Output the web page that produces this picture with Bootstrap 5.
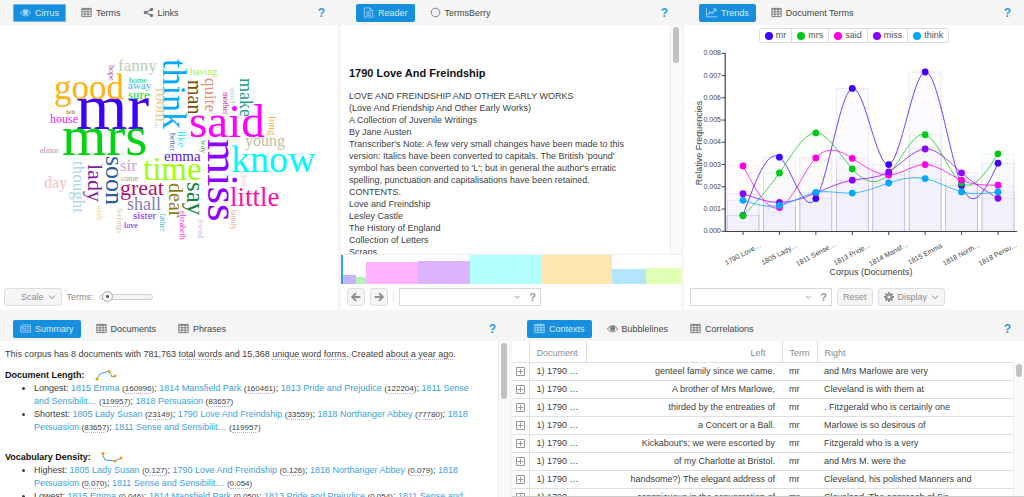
<!DOCTYPE html>
<html lang="en">
<head>
<meta charset="utf-8">
<meta name="viewport" content="width=device-width, initial-scale=1">
<title>Corpus Tools</title>
<link href="https://cdn.jsdelivr.net/npm/bootstrap@5.3.0/dist/css/bootstrap.min.css" rel="stylesheet">
<script src="https://cdn.jsdelivr.net/npm/bootstrap@5.3.0/dist/js/bootstrap.bundle.min.js"></script>
<style>
  :root { --shell: #f5f5f5; --accent: #168fdf; --link: #3c9fe0; }
  body { font: 9px/12px "Liberation Sans", Arial, sans-serif; color: #404040; background: var(--shell); }
  button, input { font: inherit; color: inherit; }
  a { color: var(--link); text-decoration: none; }
  .workspace { grid-template-rows: minmax(0, 310fr) minmax(0, 181fr); gap: 6px; }
  .row-top, .row-bottom { gap: 3px; min-height: 0; }
  .row-top { grid-template-columns: minmax(0, 338fr) minmax(0, 340fr) minmax(0, 340fr); }
  .row-bottom { grid-template-columns: minmax(0, 509fr) minmax(0, 512fr); }
  .pane { min-width: 0; min-height: 0; }
  .pane-head { height: 25px; padding: 0 13px; flex: none; }
  .pane + .pane .pane-head { padding-left: 15px; }
  .pane-body { background: #fff; min-height: 0; }
  .tab { height: 18px; padding: 0 7px; gap: 4px; border: 0; border-radius: 2px; background: none; color: #444; line-height: 16px; }
  .tab svg { width: 11px; height: 11px; color: #777; }
  .tab.active { background: var(--accent); color: #d9eefb; }
  .tab.active svg { color: #9fd3f7; }
  .tab.ringed { box-shadow: inset 0 0 0 1px #6bb6ec; }
  .help { border: 0; background: none; padding: 0; color: #2f9be0; font-size: 12px; font-weight: 700; }
  .tools { height: 26px; padding: 4px 6px; gap: 5px; flex: none; color: #8a8a8a; }
  .tool { height: 18px; border: 1px solid #dedede; border-radius: 3px; background: #f5f5f5; color: #8e8e8e; padding: 0 5px; gap: 4px; line-height: 16px; }
  .tool svg { width: 10px; height: 10px; }
  .tool svg.chev { width: 8px; height: 8px; }
  .tool-icon { padding: 0 3px; }
  .combo { height: 18px; width: 142px; border: 1px solid #d9d9d9; background: #fff; padding-right: 4px; gap: 9px; }
  .combo input { border: 0; outline: 0; background: none; min-width: 0; height: 16px; padding: 0 4px; }
  .combo button { border: 0; padding: 0; background: none; color: #999; font-weight: 700; font-size: 11px; }
  .combo svg { width: 8px; height: 8px; }
  .slim { appearance: none; width: 54px; height: 12px; background: none; margin: 0; }
  .slim::-webkit-slider-runnable-track { height: 6px; border: 1px solid #d0d0d0; border-radius: 3px; background: #f5f5f5; }
  .slim::-webkit-slider-thumb { appearance: none; width: 11px; height: 11px; margin-top: -4px; border: 1px solid #aaa; border-radius: 50%; background: radial-gradient(circle, #555 0 1px, #f5f5f5 2px); }
  .rail { width: 11px; flex: none; background: #fafafa; border-left: 1px solid #ececec; padding: 2px; }
  .thumb { width: 6px; border-radius: 3px; background: #c1c1c1; }
  .book { padding: 42px 30px 0 8px; min-height: 0; }
  .book h1 { font-size: 11px; line-height: 12px; font-weight: 700; color: #111; margin: 0 0 11px; }
  .strip { height: 30px; flex: none; border-top: 1px solid #eee; }
  .strip .cursor { width: 2px; height: 29px; background: #3a9ee2; flex: none; }
  .legend { height: 15px; margin-top: 3px; border: 1px solid #ddd; border-radius: 3px; }
  .legend button { border: 0; border-left: 1px solid #ddd; background: none; padding: 0 5px; gap: 3px; line-height: 13px; color: #555; }
  .legend button:first-child { border-left: 0; }
  .legend i { width: 8px; height: 8px; border-radius: 50%; }
  .digest { padding: 7px 12px 0 5px; line-height: 13px; min-height: 0; }
  .digest h2 { font-size: 9px; line-height: 13px; font-weight: 700; color: #111; margin: 0; }
  .digest ul { padding-left: 29px; margin: 0 0 17px; }
  .digest small { font-size: 8px; }
  .hint { border-bottom: 1px dotted #b9a9f0; }
  .spark { width: 22px; height: 11px; margin-left: 10px; }
  .kwic { table-layout: fixed; line-height: 13px; color: #404040; white-space: nowrap; }
  .kwic > :not(caption) > * > * { height: 18px; padding: 2px 7px; border-bottom: 1px solid #dedede; color: inherit; overflow: hidden; }
  .kwic > thead > tr > th { height: 21px; padding-top: 4px; font-weight: 400; color: #8c8c8c; border-left: 1px solid #dedede; }
  .kwic > thead > tr > th:first-child { border-left: 0; }
  .kwic > tbody > tr > td:first-child { padding: 4px 0 0 4px; border-right: 1px solid #dedede; }
  .kwic > tbody > tr > td:nth-child(2) { padding-right: 0; }
  .kwic svg { width: 9px; height: 9px; display: block; }
  .kwic button { border: 0; background: none; padding: 0; color: #999; display: block; }
  .kwic-rail { top: 21px; right: 0; bottom: 0; }
  .pane-foot { border-bottom: 1px solid #ccc; }
  .chart text { fill: #444; font-family: "Liberation Sans", Arial, sans-serif; }
  .cloud text { font-family: "Palatino Linotype", Palatino, "Liberation Serif", serif; }
</style>
</head>
<body>
<svg class="d-none">
  <symbol id="i-grid" viewBox="0 0 12 11"><path d="M.9 1h10.2v9H.9zM.9 2h10.2M.9 4.7h10.2M.9 7.3h10.2M4.3 1v9M7.7 1v9" fill="none" stroke="currentColor"/></symbol>
  <symbol id="i-eye" viewBox="0 0 12 11"><path d="M.5 6C3.3 1.3 8.7 1.3 11.5 6 8.7 10.2 3.3 10.2.5 6z" fill="none" stroke="currentColor"/><circle cx="6" cy="5.2" r="2.8" fill="currentColor"/><path d="M4.6 5.2A1.5 1.5 0 0 1 6 3.8" fill="none" stroke="#fff" stroke-opacity=".7" stroke-width=".6"/></symbol>
  <symbol id="i-share" viewBox="0 0 12 11"><path d="M9.2 2.2 3 5.5l6.2 3.3" fill="none" stroke="currentColor" stroke-width="1.2"/><circle cx="9.2" cy="2.3" r="1.9" fill="currentColor"/><circle cx="2.7" cy="5.5" r="1.9" fill="currentColor"/><circle cx="9.2" cy="8.7" r="1.9" fill="currentColor"/></symbol>
  <symbol id="i-file" viewBox="0 0 12 11"><path d="M1.5.5h6l3 2.8v7.2h-9zM7.3.5v3h3M3.5 5h5M3.5 6.8h5M3.5 8.6h5" fill="none" stroke="currentColor" stroke-width=".9"/></symbol>
  <symbol id="i-ring" viewBox="0 0 12 11"><circle cx="6" cy="5.5" r="4.7" fill="none" stroke="currentColor"/></symbol>
  <symbol id="i-line" viewBox="0 0 12 11"><path d="M.5.5v9.7H12" fill="none" stroke="currentColor"/><path d="m2 8 2.7-3.2 2 1.8L10.3 2M7.8 1.7h2.8v2.8" fill="none" stroke="currentColor" stroke-width="1.2"/></symbol>
  <symbol id="i-news" viewBox="0 0 12 11"><path d="M2.2 1.5h9.3v8H1.4a.9.9 0 0 1-.9-.9V3h1.7v5.8M3.7 3.3h3v2.6h-3zM7.8 3.3h2.7M7.8 5.2h2.7M3.7 7.5h6.8" fill="none" stroke="currentColor" stroke-width=".9"/></symbol>
  <symbol id="i-left" viewBox="0 0 10 10"><path d="M9.3 5H1.6M5 1.2 1.2 5 5 8.8" fill="none" stroke="currentColor" stroke-width="1.9"/></symbol>
  <symbol id="i-right" viewBox="0 0 10 10"><path d="M.7 5h7.7M5 1.2 8.8 5 5 8.8" fill="none" stroke="currentColor" stroke-width="1.9"/></symbol>
  <symbol id="i-down" viewBox="0 0 8 8"><path d="m1.2 2.6 2.8 3 2.8-3" fill="none" stroke="currentColor"/></symbol>
  <symbol id="i-gear" viewBox="0 0 10 10"><circle cx="5" cy="5" r="2.6" fill="none" stroke="currentColor" stroke-width="2"/><path d="M5 0v2M5 8v2M0 5h2M8 5h2M1.5 1.5l1.3 1.3M7.2 7.2l1.3 1.3M8.5 1.5 7.2 2.8M2.8 7.2 1.5 8.5" stroke="currentColor" stroke-width="1.8"/></symbol>
  <symbol id="i-plus" viewBox="0 0 9 9"><path d="M.5.5h8v8h-8zM4.5 2v5M2 4.5h5" fill="none" stroke="currentColor"/></symbol>
</svg>

<main class="workspace d-grid vh-100 overflow-hidden">
  <div class="row-top d-grid">
    <section class="pane d-flex flex-column">
      <header class="pane-head d-flex align-items-center">
        <nav class="nav flex-grow-1 column-gap-2">
          <button class="tab ringed active d-flex align-items-center"><svg><use href="#i-eye"/></svg>Cirrus</button>
          <button class="tab d-flex align-items-center"><svg><use href="#i-grid"/></svg>Terms</button>
          <button class="tab d-flex align-items-center"><svg><use href="#i-share"/></svg>Links</button>
        </nav>
        <button class="help">?</button>
      </header>
      <div class="pane-body flex-grow-1 d-flex flex-column">
        <svg class="cloud w-100 flex-grow-1" id="cloud" viewBox="0 25 338 259" style="min-height:0"></svg>
        <div class="tools d-flex align-items-center ps-1">
          <button class="tool d-flex align-items-center ps-3">Scale <svg class="chev"><use href="#i-down"/></svg></button>
          <label for="terms">Terms:</label>
          <input id="terms" class="slim" type="range" min="0" max="100" value="6">
        </div>
      </div>
    </section>

    <section class="pane d-flex flex-column">
      <header class="pane-head d-flex align-items-center">
        <nav class="nav flex-grow-1 column-gap-2">
          <button class="tab active d-flex align-items-center"><svg><use href="#i-file"/></svg>Reader</button>
          <button class="tab d-flex align-items-center"><svg><use href="#i-ring"/></svg>TermsBerry</button>
        </nav>
        <button class="help">?</button>
      </header>
      <div class="pane-body flex-grow-1 d-flex flex-column">
        <div class="d-flex flex-grow-1 overflow-hidden">
          <article class="book flex-grow-1 overflow-hidden">
            <h1>1790 Love And Freindship</h1>
            LOVE AND FREINDSHIP AND OTHER EARLY WORKS<br>
            (Love And Friendship And Other Early Works)<br>
            A Collection of Juvenile Writings<br>
            By Jane Austen<br>
            Transcriber's Note: A few very small changes have been made to this version: Italics have been converted to capitals. The British 'pound' symbol has been converted to 'L'; but in general the author's erratic spelling, punctuation and capitalisations have been retained.<br>
            CONTENTS.<br>
            Love and Freindship<br>
            Lesley Castle<br>
            The History of England<br>
            Collection of Letters<br>
            Scraps
          </article>
          <div class="rail"><div class="thumb" style="height:16%"></div></div>
        </div>
        <div class="strip d-flex align-items-end" id="strip"><div class="cursor"></div></div>
        <div class="tools d-flex align-items-center">
          <button class="tool tool-icon d-flex align-items-center" aria-label="Previous"><svg><use href="#i-left"/></svg></button>
          <button class="tool tool-icon d-flex align-items-center" aria-label="Next"><svg><use href="#i-right"/></svg></button>
          <div class="vr my-1"></div>
          <div class="combo d-flex align-items-center">
            <input class="flex-grow-1" aria-label="Search terms">
            <svg><use href="#i-down"/></svg><button>?</button>
          </div>
        </div>
      </div>
    </section>

    <section class="pane d-flex flex-column">
      <header class="pane-head d-flex align-items-center">
        <nav class="nav flex-grow-1 column-gap-2">
          <button class="tab active d-flex align-items-center"><svg><use href="#i-line"/></svg>Trends</button>
          <button class="tab d-flex align-items-center"><svg><use href="#i-grid"/></svg>Document Terms</button>
        </nav>
        <button class="help">?</button>
      </header>
      <div class="pane-body flex-grow-1 d-flex flex-column">
        <div class="legend d-flex align-self-center" id="legend"></div>
        <svg class="chart w-100 flex-grow-1" id="chart" viewBox="684 43 340 241" style="min-height:0"></svg>
        <div class="tools d-flex align-items-center">
          <div class="combo d-flex align-items-center">
            <input class="flex-grow-1" aria-label="Search trends">
            <svg><use href="#i-down"/></svg><button>?</button>
          </div>
          <button class="tool">Reset</button>
          <button class="tool d-flex align-items-center"><svg><use href="#i-gear"/></svg>Display <svg class="chev"><use href="#i-down"/></svg></button>
        </div>
      </div>
    </section>
  </div>

  <div class="row-bottom d-grid">
    <section class="pane d-flex flex-column">
      <header class="pane-head d-flex align-items-center">
        <nav class="nav flex-grow-1 column-gap-2">
          <button class="tab active d-flex align-items-center"><svg><use href="#i-news"/></svg>Summary</button>
          <button class="tab d-flex align-items-center"><svg><use href="#i-grid"/></svg>Documents</button>
          <button class="tab d-flex align-items-center"><svg><use href="#i-grid"/></svg>Phrases</button>
        </nav>
        <button class="help">?</button>
      </header>
      <div class="pane-body flex-grow-1 d-flex overflow-hidden">
        <div class="digest flex-grow-1 overflow-hidden">
          <p class="mb-2">This corpus has 8 documents with 781,763 <span class="hint">total words</span> and 15,368 <span class="hint">unique word forms</span>. Created <span class="hint">about a year ago</span>.</p>
          <h2 class="d-flex align-items-center">Document Length:
            <svg class="spark" viewBox="0 0 22 11"><path d="M1 10 5 4l9-3 3 6 3-1" fill="none" stroke="#3c9fe0"/><g fill="#f90"><circle cx="2" cy="9" r="1.5"/><circle cx="14" cy="1.5" r="1.5"/><circle cx="20" cy="6" r="1.5"/></g></svg></h2>
          <ul>
            <li>Longest: <a href="#">1815 Emma</a> <small>(<span class="hint">160996</span>)</small>; <a href="#">1814 Mansfield Park</a> <small>(<span class="hint">160461</span>)</small>; <a href="#">1813 Pride and Prejudice</a> <small>(<span class="hint">122204</span>)</small>; <a href="#">1811 Sense and Sensibilit…</a> <small>(<span class="hint">119957</span>)</small>; <a href="#">1818 Persuasion</a> <small>(<span class="hint">83657</span>)</small></li>
            <li>Shortest: <a href="#">1805 Lady Susan</a> <small>(<span class="hint">23149</span>)</small>; <a href="#">1790 Love And Freindship</a> <small>(<span class="hint">33559</span>)</small>; <a href="#">1818 Northanger Abbey</a> <small>(<span class="hint">77780</span>)</small>; <a href="#">1818 Persuasion</a> <small>(<span class="hint">83657</span>)</small>; <a href="#">1811 Sense and Sensibilit…</a> <small>(<span class="hint">119957</span>)</small></li>
          </ul>
          <h2 class="d-flex align-items-center">Vocabulary Density:
            <svg class="spark" viewBox="0 0 22 11"><path d="m1 1 3 7 10 1 6-3" fill="none" stroke="#3c9fe0"/><g fill="#f90"><circle cx="2" cy="1.5" r="1.5"/><circle cx="14" cy="9" r="1.5"/><circle cx="20" cy="6" r="1.5"/></g></svg></h2>
          <ul>
            <li>Highest: <a href="#">1805 Lady Susan</a> <small>(<span class="hint">0.127</span>)</small>; <a href="#">1790 Love And Freindship</a> <small>(<span class="hint">0.126</span>)</small>; <a href="#">1818 Northanger Abbey</a> <small>(<span class="hint">0.079</span>)</small>; <a href="#">1818 Persuasion</a> <small>(<span class="hint">0.070</span>)</small>; <a href="#">1811 Sense and Sensibilit…</a> <small>(<span class="hint">0.054</span>)</small></li>
            <li>Lowest: <a href="#">1815 Emma</a> <small>(<span class="hint">0.046</span>)</small>; <a href="#">1814 Mansfield Park</a> <small>(<span class="hint">0.050</span>)</small>; <a href="#">1813 Pride and Prejudice</a> <small>(<span class="hint">0.054</span>)</small>; <a href="#">1811 Sense and</a></li>
          </ul>
        </div>
        <div class="rail"><div class="thumb" style="height:37%"></div></div>
      </div>
    </section>

    <section class="pane d-flex flex-column">
      <header class="pane-head d-flex align-items-center">
        <nav class="nav flex-grow-1 column-gap-2">
          <button class="tab active d-flex align-items-center"><svg><use href="#i-grid"/></svg>Contexts</button>
          <button class="tab d-flex align-items-center"><svg><use href="#i-eye"/></svg>Bubblelines</button>
          <button class="tab d-flex align-items-center"><svg><use href="#i-grid"/></svg>Correlations</button>
        </nav>
        <button class="help">?</button>
      </header>
      <div class="pane-body pane-foot flex-grow-1 position-relative overflow-hidden">
        <table class="kwic table mb-0">
          <colgroup><col style="width:17px"><col style="width:57px"><col><col style="width:35px"><col style="width:207px"></colgroup>
          <thead><tr><th></th><th>Document</th><th class="text-end pe-3">Left</th><th>Term</th><th>Right</th></tr></thead>
          <tbody id="kwic"></tbody>
        </table>
        <div class="rail kwic-rail position-absolute"><div class="thumb" style="height:10%"></div></div>
      </div>
    </section>
  </div>
</main>

<script>
const NS = 'http://www.w3.org/2000/svg';
function add(parent, tag, attrs, text) {
  const el = document.createElementNS(NS, tag);
  for (const k in attrs) el.setAttribute(k, attrs[k]);
  if (text) el.textContent = text;
  parent.append(el);
  return el;
}

// Word cloud: word, x, y, size, colour, 1 when turned on its side
const words = [
  ['mr',76,129,66,'#3d00ff'],['mrs',62,155,57,'#00d310'],['good',54,99,35,'#ffb012'],['fanny',118,71,17,'#b8cdb8'],
  ['home',129,83,8,'#21d04d'],['away',128,89,11,'#47b0f5'],['sure',128,99,13,'#14d62c'],['felt',66,114,7,'#7d641c'],
  ['house',50,123,12,'#ef24df'],['elinor',40,153,8,'#9890c2'],['having',190,75,10,'#a8ef45'],['said',189,137,47,'#ff00ff'],
  ['young',245,146,16,'#c4baa0'],['know',231,172,38,'#00f8ff'],['emma',164,161,15,'#5416f0'],['time',143,180,33,'#9dff0a'],
  ['sir',120,171,17,'#cba3da'],['come',121,181,8,'#b3a066'],['great',120,195,22,'#b40f72'],['shall',127,210,18,'#8380b8'],
  ['sister',133,219,11,'#7c22f3'],['love',124,228,8,'#4217f0'],['day',44,188,16,'#f5c0ba'],['little',230,206,27,'#ff0dab'],
  ['think',163,59,34,'#00a9ff',1],['hope',109,65,8,'#a048ad',1],['room',156,88,16,'#e9c991',1],['oh',154,122,6,'#b9d7f2',1],
  ['man',188,80,20,'#735008',1],['quite',205,78,17,'#dc8e80',1],['mother',223,92,8,'#ac2a86',1],['mind',230,87,8,'#c5d0c2',1],
  ['make',240,78,18,'#1d9b90',1],['long',269,116,11,'#f4b33b',1],['like',178,131,11,'#1fe6f5',1],['better',170,133,8,'#4d6ba8',1],
  ['way',201,140,8,'#3f9b58',1],['miss',208,139,45,'#8b00ff',1],['lady',88,164,22,'#7f1d9b',1],['soon',106,156,26,'#2b5c9e',1],
  ['thought',73,161,17,'#aed4ee',1],['wish',97,205,8,'#f0d275',1],['feelings',117,208,8,'#cfc8b4',1],['dear',169,183,20,'#8b7d18',1],
  ['say',187,182,25,'#128036',1],['father',160,213,8,'#46b9c9',1],['elizabeth',180,211,8,'#f825c4',1],['friend',198,219,8,'#d5b4df',1],
  ['family',231,209,8,'#e8a794',1],['just',242,175,8,'#f4cbc8',1]];
const cloud = document.getElementById('cloud');
for (const [w, x, y, size, fill, side] of words)
  add(cloud, 'text', { transform: `translate(${x} ${y})${side ? ' rotate(90)' : ''}`, 'font-size': size, fill }, w);

// Reader strip: width, height in percent, colour
for (const [w, h, c] of [[13,30,'#c4b3ff'],[10,25,'#b3f2b7'],[52,76,'#ffb3ff'],[52,79,'#dcb3ff'],[70,99,'#b3ffff'],[71,99,'#ffe6b0'],[34,52,'#b3e5ff'],[35,55,'#e1ffb3']])
  document.getElementById('strip').insertAdjacentHTML('beforeend', `<div style="flex:${w} 1 0;height:${h}%;background:${c}"></div>`);

// Trends: relative frequency per document, in thousandths
const series = [
  ['mr','#3d00ff',[.72,3.33,1.47,6.42,3,7.16,2.06,3.06]],
  ['mrs','#00c814',[.7,2.62,4.42,2.8,2.58,4.34,2.17,3.48]],
  ['said','#ff00e6',[2.94,1.07,3.3,3.28,2.53,3,2.3,2.07]],
  ['miss','#8b00ff',[1.69,1.3,1.72,2.3,2.67,3.7,2.63,1.48]],
  ['think','#00a9ff',[1.39,1.16,1.75,1.72,2.17,2.37,1.77,1.77]]];
const docs = ['1790 Love…','1805 Lady…','1811 Sense…','1813 Pride…','1814 Mansf…','1815 Emma','1818 North…','1818 Persu…'];
const chart = document.getElementById('chart');
const X = i => 743 + 36.43 * i, Y = v => 231.3 - 22.25 * v;

// Slopes of the natural cubic spline through equally spaced values
function slopes(y) {
  const n = y.length, c = [], d = [];
  for (let i = 0; i < n; i++) {
    const a = i ? 1 : 0, b = i && i < n - 1 ? 4 : 2;
    const r = 3 * (y[Math.min(i + 1, n - 1)] - y[Math.max(i - 1, 0)]);
    const m = b - a * (i ? c[i - 1] : 0);
    c[i] = 1 / m;
    d[i] = (r - a * (i ? d[i - 1] : 0)) / m;
  }
  for (let i = n - 2; i >= 0; i--) d[i] -= c[i] * d[i + 1];
  return d;
}
for (const [, color, vals] of series)
  vals.forEach((v, i) => add(chart, 'rect', { x: X(i) - 16, y: Y(v), width: 32, height: 231.3 - Y(v), fill: color, 'fill-opacity': .014, stroke: color, 'stroke-opacity': .1, 'stroke-width': .8 }));
add(chart, 'path', { d: 'M725.2 53v178.5H1017', fill: 'none', stroke: '#444', 'stroke-width': 1.2 });
for (let v = 0; v <= 8; v++) {
  add(chart, 'path', { d: `M721.5 ${Y(v)}h4`, stroke: '#444' });
  add(chart, 'text', { x: 721, y: Y(v) + 2, 'font-size': 7, 'text-anchor': 'end' }, '0.00' + v);
}
docs.forEach((t, i) => {
  add(chart, 'path', { d: `M${X(i)} 231v4`, stroke: '#444' });
  add(chart, 'text', { transform: `translate(${X(i) + 1} 256) rotate(-28)`, 'font-size': 7, 'text-anchor': 'middle' }, t);
});
add(chart, 'text', { x: 871, y: 275, 'font-size': 9, 'text-anchor': 'middle' }, 'Corpus (Documents)');
add(chart, 'text', { transform: 'translate(702 143) rotate(-90)', 'font-size': 9, 'text-anchor': 'middle' }, 'Relative Frequencies');
for (const [, color, vals] of series) {
  const ys = vals.map(Y), s = slopes(ys), h = 36.43 / 3;
  let d = `M${X(0)} ${ys[0]}`;
  for (let i = 1; i < ys.length; i++)
    d += `C${X(i - 1) + h} ${ys[i - 1] + s[i - 1] / 3} ${X(i) - h} ${ys[i] - s[i] / 3} ${X(i)} ${ys[i]}`;
  add(chart, 'path', { d, fill: 'none', stroke: color, 'stroke-opacity': .75 });
}
for (const [name, color, vals] of series) {
  vals.forEach((v, i) => add(chart, 'circle', { cx: X(i), cy: Y(v), r: 3.4, fill: color }));
  document.getElementById('legend').insertAdjacentHTML('beforeend', `<button class="d-flex align-items-center"><i style="background:${color}"></i>${name}</button>`);
}

// Keywords in context
for (const [l, r] of [
  ['genteel family since we came.', 'and Mrs Marlowe are very'],
  ['A brother of Mrs Marlowe,', 'Cleveland is with them at'],
  ['thirded by the entreaties of', '. Fitzgerald who is certainly one'],
  ['a Concert or a Ball.', 'Marlowe is so desirous of'],
  ["Kickabout's; we were escorted by", 'Fitzgerald who is a very'],
  ['of my Charlotte at Bristol.', 'and Mrs M. were the'],
  ['handsome?) The elegant address of', 'Cleveland, his polished Manners and'],
  ['conspicuous in the conversation of', 'Cleveland. The approach of Sir']])
  document.getElementById('kwic').insertAdjacentHTML('beforeend',
    `<tr><td><button aria-label="Expand"><svg><use href="#i-plus"/></svg></button></td><td>1) 1790 …</td><td class="text-end">${l}</td><td>mr</td><td>${r}</td></tr>`);
</script>
</body>
</html>
